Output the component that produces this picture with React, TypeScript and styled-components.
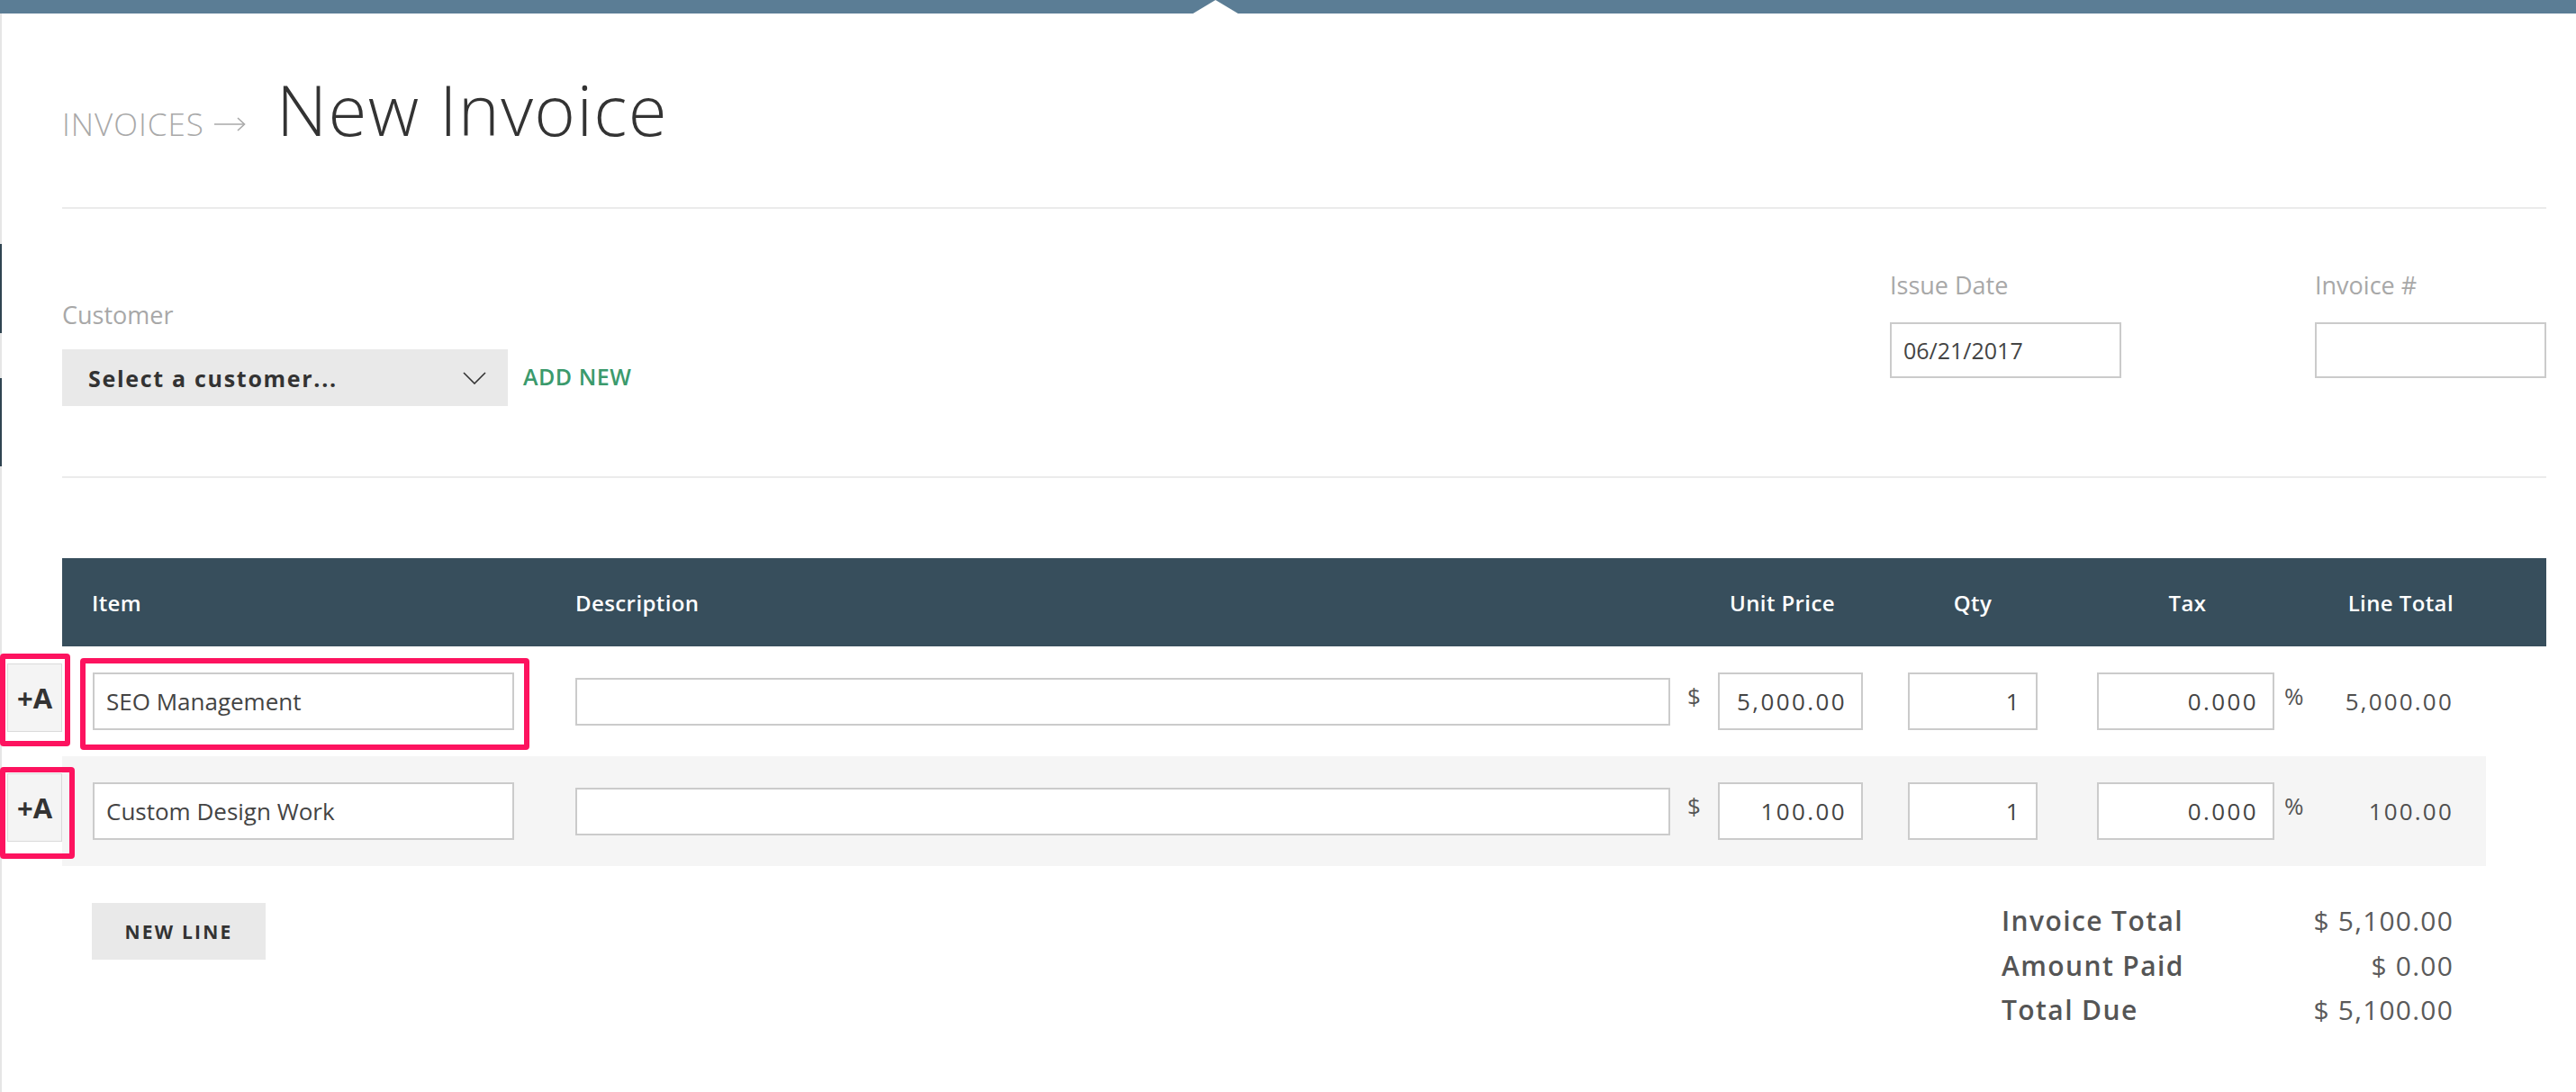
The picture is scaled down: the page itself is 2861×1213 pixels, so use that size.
import React from "react";
import styled, { createGlobalStyle } from "styled-components";

const GlobalStyle = createGlobalStyle`
  html, body { margin: 0; padding: 0; background: #fff; }
  body { font-family: "Open Sans", "Noto Sans", sans-serif; color: #333; }
  *, *::before, *::after { box-sizing: border-box; }
  #root { min-height: 100vh; }
`;

const COLS = "570px 1216px 53px 161px 194px 263px 44px 155px";

const TopBar = styled.div`
  position: relative;
  height: 15px;
  background: #5b7d95;
`;

const Notch = styled.span`
  position: absolute;
  left: 1325px;
  bottom: 0;
  width: 50px;
  height: 15px;
  background: #fff;
  clip-path: polygon(50% 0, 100% 100%, 0 100%);
`;

const Shell = styled.div`
  display: flex;
  min-height: calc(100vh - 15px);
`;

const Rail = styled.div`
  width: 2px;
  flex-shrink: 0;
  background: #e6e6e6;
  display: flex;
  flex-direction: column;
`;

const RailMark = styled.span<{ $top: number; $h: number }>`
  display: block;
  width: 2px;
  margin-top: ${(p) => p.$top}px;
  height: ${(p) => p.$h}px;
  background: #2f4451;
`;

const Main = styled.main`
  flex: 1;
  padding: 0 33px 0 6px;
`;

const TitleRow = styled.div`
  display: flex;
  align-items: baseline;
  margin: 67px 0 0 61px;
  line-height: 1;
`;

const Crumb = styled.span`
  font-size: 35px;
  font-weight: 300;
  color: #a9a9a9;
  letter-spacing: 1px;
`;

const CrumbArrow = styled.svg`
  width: 35px;
  height: 16px;
  margin: 0 34px 0 11px;
  align-self: center;
  position: relative;
  top: 17px;
`;

const Title = styled.h1`
  margin: 0;
  font-size: 78px;
  font-weight: 300;
  color: #333;
  line-height: 1;
  letter-spacing: 1.3px;
`;

const Divider = styled.hr`
  margin: 0 0 0 61px;
  border: 0;
  height: 2px;
  background: #ebebeb;
`;

const TitleDivider = styled(Divider)`
  margin-top: 70px;
`;

const FormSection = styled.section`
  display: flex;
  justify-content: space-between;
  align-items: flex-start;
  margin-left: 61px;
  padding-bottom: 78px;
`;

const CustomerBlock = styled.div`
  margin-top: 104px;
`;

const FieldLabel = styled.div<{ $gap: number }>`
  font-size: 27px;
  line-height: 1;
  color: #a8a8a8;
  margin-bottom: ${(p) => p.$gap}px;
`;

const SelectRow = styled.div`
  display: flex;
  align-items: center;
  gap: 17px;
`;

const SelectBox = styled.div`
  width: 495px;
  height: 63px;
  background: #e9e9e9;
  display: flex;
  align-items: center;
  justify-content: space-between;
  padding: 0 24px 0 29px;
  font-size: 25px;
  font-weight: 700;
  letter-spacing: 1.7px;
  color: #333;
`;

const Chevron = styled.svg`
  width: 26px;
  height: 14px;
`;

const AddNew = styled.span`
  font-size: 25px;
  font-weight: 600;
  color: #3b9a6c;
  letter-spacing: 0.5px;
  margin-bottom: 4px;
`;

const DateGroup = styled.div`
  display: flex;
  gap: 215px;
  margin-top: 71px;
`;

const Field = styled.div`
  width: 257px;
`;

const TextBox = styled.input`
  display: block;
  width: 100%;
  height: 62px;
  border: 2px solid #cbcbcb;
  border-radius: 0;
  padding: 0 13px;
  font: inherit;
  font-size: 25px;
  color: #444;
  background: #fff;
  outline: none;
`;

const TableSection = styled.section`
  margin-top: 89px;
`;

const HeadRow = styled.div`
  display: flex;
`;

const AddSlot = styled.div`
  width: 61px;
  flex-shrink: 0;
`;

const HeadGrid = styled.div`
  display: grid;
  grid-template-columns: ${COLS} 103px;
  height: 98px;
  align-items: center;
  background: #374e5c;
  color: #fff;
  font-size: 24px;
  font-weight: 600;
  letter-spacing: 0.4px;
`;

const HeadCell = styled.div<{ $align?: string; $pl?: number; $pr?: number }>`
  text-align: ${(p) => p.$align || "left"};
  padding-left: ${(p) => p.$pl || 0}px;
  padding-right: ${(p) => p.$pr || 0}px;
`;

const Row = styled.div`
  position: relative;
  display: flex;
  align-items: center;
`;

const AddButton = styled.button`
  width: 61px;
  height: 76px;
  flex-shrink: 0;
  margin-bottom: 9px;
  padding: 0;
  background: #f4f4f4;
  border: 1px solid #dadada;
  border-radius: 0;
  font-family: inherit;
  font-size: 31px;
  font-weight: 700;
  color: #333;
`;

const RowGrid = styled.div<{ $alt?: boolean }>`
  display: grid;
  grid-template-columns: ${COLS} 36px;
  min-height: 122px;
  align-items: center;
  background: ${(p) => (p.$alt ? "#f5f5f5" : "#fff")};
`;

const CellInput = styled.input<{ $w?: number; $h: number; $ml?: number; $right?: boolean }>`
  display: block;
  width: ${(p) => (p.$w ? `${p.$w}px` : "100%")};
  height: ${(p) => p.$h}px;
  margin-left: ${(p) => p.$ml || 0}px;
  justify-self: ${(p) => (p.$right ? "end" : "start")};
  border: 2px solid #cbcbcb;
  border-radius: 0;
  background: #fff;
  padding: ${(p) => (p.$right ? "0 16px 0 8px" : "0 13px")};
  text-align: ${(p) => (p.$right ? "right" : "left")};
  font: inherit;
  font-size: 26px;
  letter-spacing: ${(p) => (p.$right ? "2.4px" : "0")};
  color: #444;
  outline: none;
`;

const Unit = styled.span<{ $align: string; $pl?: number }>`
  font-size: 26px;
  color: #555;
  text-align: ${(p) => p.$align};
  padding-left: ${(p) => p.$pl || 0}px;
  margin-bottom: 12px;
`;

const LineTotal = styled.span`
  text-align: right;
  font-size: 26px;
  letter-spacing: 2.2px;
  color: #4f4f4f;
`;

const Highlight = styled.div<{ $l: number; $t: number; $w: number; $h: number }>`
  position: absolute;
  left: ${(p) => p.$l}px;
  top: ${(p) => p.$t}px;
  width: ${(p) => p.$w}px;
  height: ${(p) => p.$h}px;
  border: 6px solid #fd135f;
  border-radius: 4px;
  pointer-events: none;
  z-index: 2;
`;

const Footer = styled.div`
  display: flex;
  justify-content: space-between;
  align-items: flex-start;
  margin: 0 103px 0 61px;
`;

const NewLineButton = styled.button`
  margin: 41px 0 0 33px;
  width: 193px;
  height: 63px;
  border: 0;
  border-radius: 0;
  background: #e9e9e9;
  font-family: inherit;
  font-size: 21px;
  font-weight: 700;
  letter-spacing: 2.2px;
  color: #333;
`;

const Totals = styled.div`
  margin-top: 36px;
  width: 502px;
  display: grid;
  grid-template-columns: auto auto;
  justify-content: space-between;
  font-size: 30px;
  line-height: 49.5px;
`;

const TotalLabel = styled.span`
  font-weight: 600;
  color: #555;
  letter-spacing: 1.4px;
`;

const TotalValue = styled.span`
  font-weight: 400;
  color: #5a5a5a;
  text-align: right;
  letter-spacing: 1.2px;
`;

type Line = { item: string; price: string; qty: string; tax: string; total: string };

const lines: Line[] = [
  { item: "SEO Management", price: "5,000.00", qty: "1", tax: "0.000", total: "5,000.00" },
  { item: "Custom Design Work", price: "100.00", qty: "1", tax: "0.000", total: "100.00" },
];

export default function App() {
  return (
    <>
      <GlobalStyle />
      <TopBar>
        <Notch />
      </TopBar>
      <Shell>
        <Rail>
          <RailMark $top={256} $h={99} />
          <RailMark $top={50} $h={98} />
        </Rail>
        <Main>
          <TitleRow>
            <Crumb>INVOICES</Crumb>
            <CrumbArrow viewBox="0 0 35 16" fill="none" stroke="#a9a9a9" strokeWidth="1.6">
              <path d="M0 8H33" />
              <path d="M26 1L33.5 8L26 15" />
            </CrumbArrow>
            <Title>New Invoice</Title>
          </TitleRow>
          <TitleDivider />

          <FormSection>
            <CustomerBlock>
              <FieldLabel $gap={25}>Customer</FieldLabel>
              <SelectRow>
                <SelectBox>
                  <span>Select a customer...</span>
                  <Chevron viewBox="0 0 26 14" fill="none" stroke="#333" strokeWidth="1.6">
                    <path d="M1 1L13 13L25 1" />
                  </Chevron>
                </SelectBox>
                <AddNew>ADD NEW</AddNew>
              </SelectRow>
            </CustomerBlock>
            <DateGroup>
              <Field>
                <FieldLabel $gap={28}>Issue Date</FieldLabel>
                <TextBox readOnly defaultValue="06/21/2017" />
              </Field>
              <Field>
                <FieldLabel $gap={28}>Invoice #</FieldLabel>
                <TextBox readOnly defaultValue="" />
              </Field>
            </DateGroup>
          </FormSection>
          <Divider />

          <TableSection>
            <HeadRow>
              <AddSlot />
              <HeadGrid>
                <HeadCell $pl={33}>Item</HeadCell>
                <HeadCell>Description</HeadCell>
                <HeadCell />
                <HeadCell $align="center" $pr={18}>Unit Price</HeadCell>
                <HeadCell $align="center" $pl={50}>Qty</HeadCell>
                <HeadCell $align="center" $pl={70}>Tax</HeadCell>
                <HeadCell />
                <HeadCell $align="right">Line Total</HeadCell>
                <HeadCell />
              </HeadGrid>
            </HeadRow>

            {lines.map((l, i) => (
              <Row key={l.item}>
                <AddButton>+A</AddButton>
                <RowGrid $alt={i % 2 === 1}>
                  <CellInput readOnly defaultValue={l.item} $w={468} $h={64} $ml={34} />
                  <CellInput readOnly defaultValue="" $h={53} />
                  <Unit $align="center">$</Unit>
                  <CellInput readOnly defaultValue={l.price} $h={64} $right />
                  <CellInput readOnly defaultValue={l.qty} $w={144} $h={64} $right />
                  <CellInput readOnly defaultValue={l.tax} $w={197} $h={64} $right />
                  <Unit $align="left" $pl={11}>%</Unit>
                  <LineTotal>{l.total}</LineTotal>
                  <span />
                </RowGrid>
                {i === 0 ? (
                  <>
                    <Highlight $l={-8} $t={8} $w={78} $h={103} />
                    <Highlight $l={81} $t={13} $w={499} $h={102} />
                  </>
                ) : (
                  <Highlight $l={-8} $t={12} $w={83} $h={102} />
                )}
              </Row>
            ))}
          </TableSection>

          <Footer>
            <NewLineButton>NEW LINE</NewLineButton>
            <Totals>
              <TotalLabel>Invoice Total</TotalLabel>
              <TotalValue>$ 5,100.00</TotalValue>
              <TotalLabel>Amount Paid</TotalLabel>
              <TotalValue>$ 0.00</TotalValue>
              <TotalLabel>Total Due</TotalLabel>
              <TotalValue>$ 5,100.00</TotalValue>
            </Totals>
          </Footer>
        </Main>
      </Shell>
    </>
  );
}
